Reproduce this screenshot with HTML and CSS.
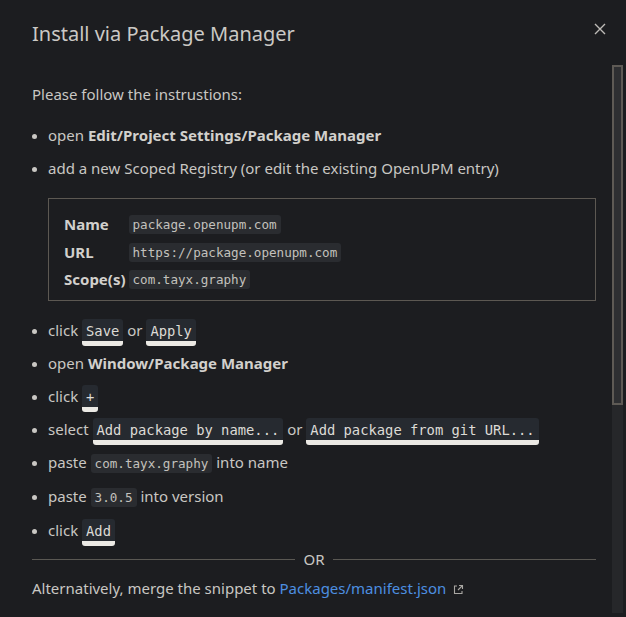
FILE: index.html
```html
<!DOCTYPE html>
<html lang="en">
<head>
    <meta charset="UTF-8">
    <meta name="viewport" content="width=device-width, initial-scale=1.0">
    <title>Install via Package Manager</title>
    <link rel="stylesheet" href="styles.css">
</head>
<body>

    <div class="dialog">
        <div class="dialog-header">
            <h2 class="dialog-title">Install via Package Manager</h2>
            <button class="close-btn" aria-label="Close">
                <svg width="12" height="12" viewBox="0 0 12 12"><path d="M1 1L11 11M11 1L1 11" stroke="currentColor" stroke-width="1.4" fill="none"/></svg>
            </button>
        </div>

        <div class="dialog-body">
            <p class="intro">Please follow the instrustions:</p>
            <ul class="steps">
                <li>open <strong>Edit/Project Settings/Package Manager</strong></li>
                <li>add a new Scoped Registry (or edit the existing OpenUPM entry)
                    <div class="registry">
                        <span class="reg-label">Name</span><span><code>package.openupm.com</code></span>
                        <span class="reg-label">URL</span><span><code>https://package.openupm.com</code></span>
                        <span class="reg-label">Scope(s)</span><span><code>com.tayx.graphy</code></span>
                    </div>
                </li>
                <li>click <kbd>Save</kbd> or <kbd>Apply</kbd></li>
                <li>open <strong>Window/Package Manager</strong></li>
                <li>click <kbd>+</kbd></li>
                <li>select <kbd>Add package by name...</kbd> or <kbd>Add package from git URL...</kbd></li>
                <li>paste <code>com.tayx.graphy</code> into name</li>
                <li>paste <code>3.0.5</code> into version</li>
                <li>click <kbd>Add</kbd></li>
            </ul>

            <div class="divider"><span>OR</span></div>

            <p class="alt">Alternatively, merge the snippet to <a href="#">Packages/manifest.json</a>
                <svg class="ext-icon" width="11" height="11" viewBox="0 0 11 11"><path d="M6 1.5H9.5V5M9.5 1.5L5 6M4 2H1.5V9.5H9V7" stroke="currentColor" stroke-width="1.1" fill="none"/></svg>
            </p>

<pre class="snippet">{
  "scopedRegistries": [
    {
      "name": "package.openupm.com",
      "url": "https://package.openupm.com",
      "scopes": [
        "com.tayx.graphy"
      ]
    }
  ],
  "dependencies": {
    "com.tayx.graphy": "3.0.5"
  }
}</pre>
        </div>

        <!-- body scrollbar, drawn over the right edge -->
        <div class="scrollbar">
            <div class="scrollbar-thumb"></div>
        </div>
    </div>

</body>
</html>
```

FILE: styles.css
```css
body {
    margin: 0;
    padding: 0;
    background-color: #1c1d20;
    color: #c9c7c3;
    font-family: 'Noto Sans', 'Open Sans', sans-serif;
    font-size: 15px;
}
.dialog {
    position: relative;
    width: 626px;
    height: 617px;
    background-color: #1c1d20;
}
.dialog-header {
    display: flex;
    justify-content: space-between;
    align-items: flex-start;
    height: 65px;
    padding: 0 20px 0 32px;
    box-sizing: border-box;
}
.dialog-title {
    margin: 20px 0 0;
    font-size: 20px;
    font-weight: 400;
    line-height: 28px;
    color: #cbc9c5;
}
.close-btn {
    margin-top: 23px;
    padding: 0;
    border: none;
    background: none;
    color: #bdbbb7;
    cursor: pointer;
    line-height: 0;
}
.dialog-body {
    height: 548px;
    width: 612px;
    overflow: hidden;
    padding: 18px 16px 16px 32px;
    box-sizing: border-box;
}
.scrollbar {
    position: absolute;
    top: 65px;
    right: 3px;
    width: 11px;
    height: 548px;
    background: #26272a;
}
.scrollbar-thumb {
    height: 340px;
    background: #2e2f32;
    border: 2px solid #5e5a55;
    box-sizing: border-box;
}
.intro {
    margin: 0 0 19px;
    line-height: 22px;
}
.steps {
    margin: 0;
    padding-left: 16px;
}
.steps li {
    line-height: 23px;
    margin-bottom: 10px;
}
.steps li::marker {
    font-size: 13px;
}
strong {
    font-weight: 700;
    color: #d2d0cc;
}
code, kbd, pre {
    font-family: 'DejaVu Sans Mono', 'Liberation Mono', monospace;
}
code {
    font-size: 12.6px;
    background-color: #2a2c30;
    color: #c3c1bd;
    padding: 2px 4px;
    border-radius: 3px;
}
kbd {
    display: inline-block;
    font-size: 13.8px;
    line-height: 18px;
    padding: 3px 4px 1px;
    margin: -6px 0 -8px;
    background-color: #262a30;
    color: #dddbd6;
    border-bottom: 5px solid #ebe9e4;
    border-radius: 3px;
}
.registry {
    display: grid;
    grid-template-columns: auto 1fr;
    grid-auto-rows: 20px;
    column-gap: 3px;
    row-gap: 7.5px;
    align-items: center;
    margin: 18px 0 18px;
    padding: 15px 15px 11px;
    border: 1px solid #5c5852;
    line-height: 20px;
}
.reg-label {
    font-weight: 700;
    color: #d2d0cc;
}
.divider {
    display: flex;
    align-items: center;
    gap: 8px;
    margin: -4px 0 0;
    color: #c9c7c3;
    line-height: 22px;
}
.divider::before, .divider::after {
    content: "";
    flex: 1;
    height: 1px;
    background-color: #5a5853;
}
.alt {
    margin: 7px 0 0;
    line-height: 22px;
}
a {
    color: #4d8fe0;
    text-decoration: none;
}
.ext-icon {
    color: #a9a7a3;
    margin-left: 3px;
    vertical-align: -1px;
}
.snippet {
    margin: 28px 0 0;
    padding: 12px 16px;
    background-color: #25272b;
    border-radius: 4px;
    font-size: 13px;
    line-height: 20px;
    color: #c3c1bd;
}
```
